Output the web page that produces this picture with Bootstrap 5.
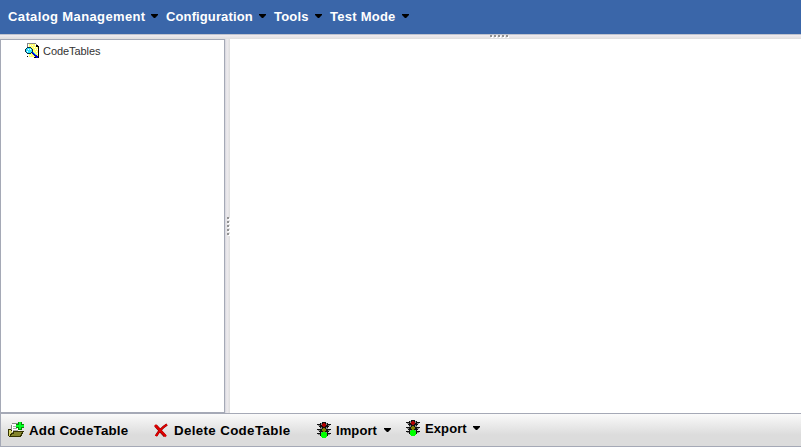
<!DOCTYPE html>
<html lang="en">
<head>
<meta charset="utf-8">
<title>CodeTables</title>
<link href="https://cdn.jsdelivr.net/npm/bootstrap@5.3.0/dist/css/bootstrap.min.css" rel="stylesheet">
<style>
body{font-family:"Liberation Sans",Arial,sans-serif;height:447px;color:#000}
.menu-bar{height:34px;background:#3a66a9;padding:0 0 0 8px;font-size:13px;letter-spacing:.38px;flex:none}
.menu-bar a{color:#fff}
.menu-bar .caret{margin-bottom:2px}
.m1{width:158px}.m2{width:108px}.m3{width:56px}
.m1 span{width:143px}.m2 span{width:93px;letter-spacing:.12px}.m3 span{width:41px;letter-spacing:.2px}.m4 span{width:72px;letter-spacing:.25px}
.caret{width:7px;height:4px;flex:none;background:#000;clip-path:polygon(0 0,100% 0,100% 25%,58% 100%,42% 100%,0 25%)}
.split-h{height:5px;flex:none;background:linear-gradient(#bfc3ce 0 1px,#f0ecf0 1px,#dedede);padding:1px 0 0 490px}
.split-v{width:5px;flex:none;background:linear-gradient(90deg,#d4d5dc,#eeebee 40%,#dedede);padding-left:2px}
.dots{gap:2px}
.dot{width:2px;height:2px;background:#929292;box-shadow:1px 1px #fff}
.tree{width:225px;border:1px solid #a5a9b6;padding:3px 0 0 24px;font-size:11px;color:#333}
.tree span{margin:3px 0 0 2px;letter-spacing:-.06px}
.tool-bar{height:34px;flex:none;border:1px solid #a5a9b6;border-right:0;background:linear-gradient(#fafafa,#dcdcdc 65%,#dcdcdc);font-size:13.33px}
.tool-bar a{color:#000}
.tool{height:32px;flex:none}
.tool span{margin:2px 6px 0 5px}
.tool-1{width:145px;padding-left:7px}.tool-2{width:169px;padding-left:7px}
.tool-1 span{letter-spacing:.2px}.tool-2 span{letter-spacing:.35px}
.tool-3{width:89px;padding-left:2px}.tool-4{width:90px;padding-left:2px;padding-bottom:4px}
.tool-3 span,.tool-4 span{font-size:13px;width:42px;letter-spacing:.1px}
svg{flex:none;display:block}
</style>
<script src="https://cdn.jsdelivr.net/npm/bootstrap@5.3.0/dist/js/bootstrap.bundle.min.js"></script>
</head>
<body class="d-flex flex-column overflow-hidden bg-white">
<svg width="0" height="0" class="position-absolute" shape-rendering="crispEdges"><defs>
<g id="light"><path d="M3 1h8v13H3zM0 2h4v1H0zM1 3h3v1H1zM2 4h2v1H2zM0 7h4v1H0zM1 8h3v1H1zM2 9h2v1H2zM0 11h4v1H0zM1 12h3v1H1zM10 2h4v1h-4zM10 3h3v1h-3zM10 4h2v1h-2zM10 7h4v1h-4zM10 8h3v1h-3zM10 9h2v1h-2zM10 11h4v1h-4zM10 12h3v1h-3zM5 0h4v1H5z" fill="#111"/><path d="M4 1h1v1H4zM9 1h1v1H9zM4 2h1v1H4zM9 2h1v1H9zM4 5h1v2H4zM9 5h1v2H9zM3 6h1v1H3zM10 6h1v1h-1zM4 10h1v1H4zM9 10h1v1H9zM1 3h2v1H1zM11 3h2v1h-2zM1 8h2v1H1zM11 8h2v1h-2zM1 12h2v1H1zM11 12h2v1h-2z" fill="#888"/><path d="M6 1h2v1h1v2H8v1H6V4H5V2h1z" fill="#b00000"/><path d="M6 6h2v1h1v2H8v1H6V9H5V7h1z" fill="#808000"/><path d="M5 10h4v1h1v4H9v1H5v-1H4v-4h1z" fill="#0f0"/></g>
</defs></svg>
<nav class="menu-bar d-flex align-items-center fw-bold text-nowrap">
<a class="m1 text-decoration-none d-flex align-items-center" href="#"><span>Catalog Management</span><i class="caret"></i></a>
<a class="m2 text-decoration-none d-flex align-items-center" href="#"><span>Configuration</span><i class="caret"></i></a>
<a class="m3 text-decoration-none d-flex align-items-center" href="#"><span>Tools</span><i class="caret"></i></a>
<a class="m4 text-decoration-none d-flex align-items-center" href="#"><span>Test Mode</span><i class="caret"></i></a>
</nav>
<div class="split-h"><div class="dots d-flex"><i class="dot"></i><i class="dot"></i><i class="dot"></i><i class="dot"></i><i class="dot"></i></div></div>
<main class="d-flex flex-grow-1">
<aside class="tree d-flex align-items-start">
<svg width="16" height="16" shape-rendering="crispEdges"><path d="M3 0h8v1h1v1h2v13H3z" fill="#fff"/><path d="M4 1h6v2h3v11H4z" fill="#ffff70"/><path d="M5 2h1v1H5zM7 2h1v1H7zM9 4h1v1H9zM11 4h1v1h-1zM10 6h1v1h-1zM12 6h1v1h-1zM11 8h1v1h-1zM5 12h1v1H5zM12 10h1v1h-1z" fill="#fff"/><path d="M2 0h9v1H3v3H2zM11 1h1v1h-1z" fill="#888"/><path d="M11 2h2v1h1v12H9v-1h4V4h-2zM2 13h1v1H2z" fill="#000"/><path d="M2 4h4v1h1v1h1v3H7v1H6v1H2v-1H1V9H0V6h1V5h1z" fill="#063040"/><path d="M2 5h4v1h1v3H6v1H2V9H1V6h1z" fill="#30dfff"/><path d="M3 6h1v1H3zM2 8h1v1H2zM5 6h1v1H5z" fill="#fff"/><path d="M7 9h2v1h1v1h1v1h1v1h1v2h-2v-1h-1v-1H9v-1H8v-1H7z" fill="#00c"/><path d="M8 9h1v1H8zM9 10h1v1H9zM10 11h1v1h-1z" fill="#0cf"/></svg>
<span class="lh-1">CodeTables</span></aside>
<div class="split-v d-flex flex-column justify-content-center"><div class="dots d-flex flex-column"><i class="dot"></i><i class="dot"></i><i class="dot"></i><i class="dot"></i><i class="dot"></i></div></div>
<section class="flex-grow-1"></section>
</main>
<footer class="tool-bar d-flex fw-bold text-nowrap">
<a class="tool tool-1 d-flex align-items-center text-decoration-none" href="#"><svg width="16" height="16" shape-rendering="crispEdges"><path d="M4 1h8v11H3V3h1z" fill="#888"/><path d="M4 2h8v8H4z" fill="#fff"/><path d="M5 4h3v1H5zM5 6h4v1H5zM5 8h5v1H5z" fill="#aaa"/><path d="M0 7h3v1h1v6h9v1H1v-1H0z" fill="#333300"/><path d="M1 8h2v1h1v3H3v2H1z" fill="#d6d36a"/><path d="M5 9h11v1h-1v2h-1v2h-1v1H1v-1h1v-2h1v-1h2z" fill="#333300"/><path d="M6 10h8v1h-1v2h-1v1H3v-1h1v-1h2z" fill="#85852c"/><path d="M10 0h4v2h2v4h-2v2h-4V6H8V2h2z" fill="#078a07"/><path d="M11 0h2v3h3v2h-3v2h-2V5H8V3h3z" fill="#0f2"/></svg><span>Add CodeTable</span></a>
<a class="tool tool-2 d-flex align-items-center text-decoration-none" href="#"><svg width="16" height="16"><path d="M2.5 3.5L12 14" stroke="#700" stroke-width="3.2"/><path d="M14 2.5Q7 7 3 14" stroke="#700" stroke-width="2.5" fill="none"/><path d="M2 3L13 14.5" stroke="#e00000" stroke-width="2.4"/><path d="M14 2.5Q7 7 3 14" stroke="#e00000" stroke-width="1.7" fill="none"/><path d="M2 13h3v1H2z" fill="#e00000"/></svg><span>Delete CodeTable</span></a>
<a class="tool tool-3 d-flex align-items-center text-decoration-none" href="#"><svg width="14" height="16" shape-rendering="crispEdges"><use href="#light"/></svg><span>Import</span><i class="caret"></i></a>
<a class="tool tool-4 d-flex align-items-center text-decoration-none" href="#"><svg width="14" height="16" shape-rendering="crispEdges"><use href="#light"/></svg><span>Export</span><i class="caret"></i></a>
</footer>
</body>
</html>
